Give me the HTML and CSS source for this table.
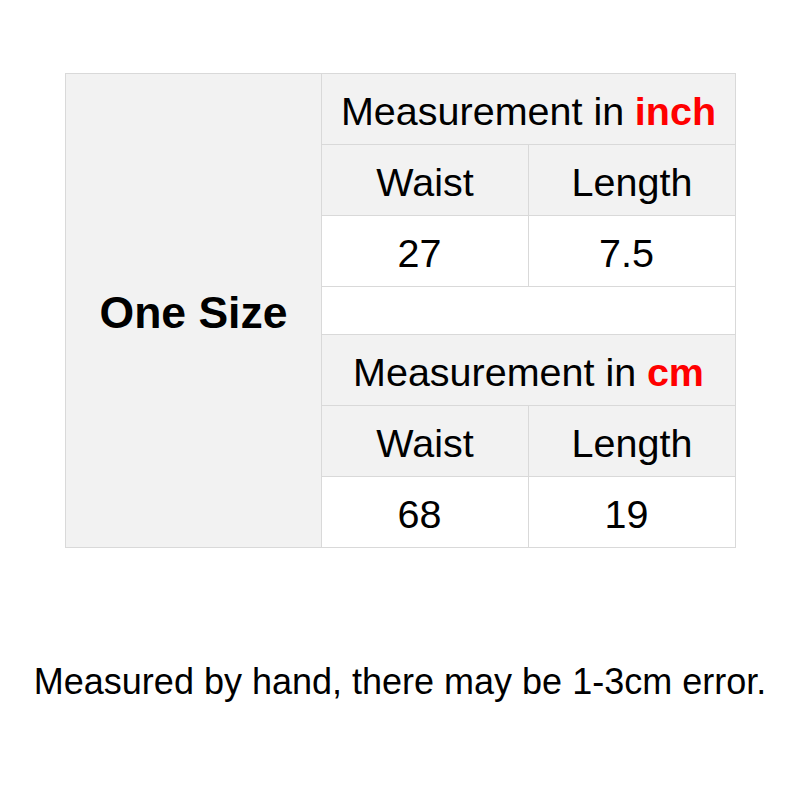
FILE: index.html
```html
<!DOCTYPE html>
<html>
<head>
<meta charset="utf-8">
<link rel="stylesheet" href="styles.css">
</head>
<body>
<div class="page">
  <div class="chart">
    <div class="size">One Size</div>
    <div class="cell head span2">Measurement in <b class="red">inch</b></div>
    <div class="cell head">Waist</div>
    <div class="cell head">Length</div>
    <div class="cell num">27</div>
    <div class="cell num">7.5</div>
    <div class="cell blank span2"></div>
    <div class="cell head span2">Measurement in <b class="red">cm</b></div>
    <div class="cell head">Waist</div>
    <div class="cell head">Length</div>
    <div class="cell num">68</div>
    <div class="cell num">19</div>
  </div>
  <p class="note">Measured by hand, there may be 1-3cm error.</p>
</div>
</body>
</html>
```

FILE: styles.css
```css
html, body {
  margin: 0;
  padding: 0;
  background: #ffffff;
}
.page {
  width: 800px;
  height: 800px;
  font-family: "Liberation Sans", Arial, sans-serif;
  color: #000;
  padding-top: 73px;
  box-sizing: border-box;
}
.chart {
  margin-left: 65px;
  width: 671px;
  box-sizing: border-box;
  display: grid;
  grid-template-columns: 255px 206px 206px;
  grid-template-rows: 70px 70px 70px 47px 70px 70px 70px;
  gap: 1px;
  padding: 1px;
  background: #d9d9d9;
}
.size {
  grid-row: 1 / 8;
  grid-column: 1;
  background: #f2f2f2;
  display: flex;
  align-items: center;
  justify-content: center;
  font-weight: bold;
  font-size: 44.5px;
  padding-top: 4px;
}
.cell {
  background: #ffffff;
  display: flex;
  align-items: center;
  justify-content: center;
  font-size: 39.5px;
  padding-top: 4px;
}
.cell.head {
  background: #f2f2f2;
}
.cell.num {
  padding-right: 11px;
}
.span2 {
  grid-column: span 2;
}
.red {
  color: #ff0000;
  margin-left: 0.27em;
}
.note {
  margin: 113px 0 0 0;
  text-align: center;
  font-size: 36px;
}
```
